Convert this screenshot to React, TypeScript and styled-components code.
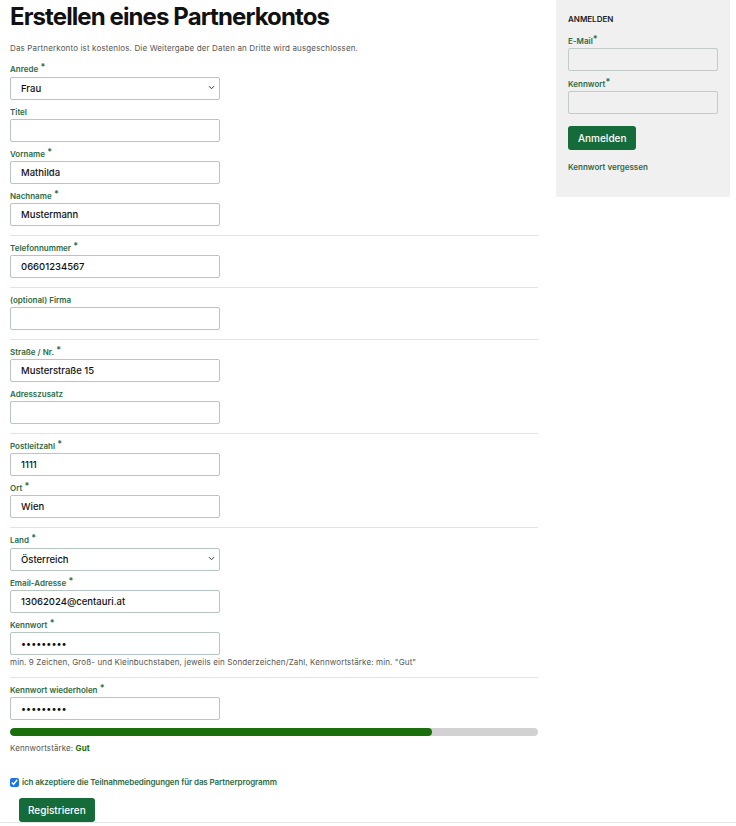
import React from "react";
import styled, { createGlobalStyle } from "styled-components";

const GlobalStyle = createGlobalStyle`
    body {
        margin: 0;
        background: #ffffff;
        font-family: Inter, "Noto Sans", sans-serif;
        color: #222;
    }
`;

type TField = {
    label: string
    required?: boolean
    value?: string
    kind?: "text" | "select" | "password"
}

const groups: TField[][] = [
    [
        { label: "Anrede", required: true, value: "Frau", kind: "select" },
        { label: "Titel" },
        { label: "Vorname", required: true, value: "Mathilda" },
        { label: "Nachname", required: true, value: "Mustermann" }
    ],
    [
        { label: "Telefonnummer", required: true, value: "06601234567" }
    ],
    [
        { label: "(optional) Firma" }
    ],
    [
        { label: "Straße / Nr.", required: true, value: "Musterstraße 15" },
        { label: "Adresszusatz" }
    ],
    [
        { label: "Postleitzahl", required: true, value: "1111" },
        { label: "Ort", required: true, value: "Wien" }
    ]
];

const FormField = ({ label, required, value = "", kind = "text" }: TField) => (
    <Field>
        <Label>
            {label}
            {required && <Star> *</Star>}
        </Label>
        {kind === "select" ? (
            <SelectWrap>
                <Select defaultValue={value}>
                    <option value={value}>{value}</option>
                </Select>
                <Chevron width="7" height="5" viewBox="0 0 7 5">
                    <path d="M1 1.2 L3.5 3.7 L6 1.2" fill="none" stroke="#333" strokeWidth="1" />
                </Chevron>
            </SelectWrap>
        ) : (
            <Input type={kind} defaultValue={value} />
        )}
    </Field>
);

const App = () => {
    return (
        <>
            <GlobalStyle />
            <Page>
                <Main>
                    <Title>Erstellen eines Partnerkontos</Title>
                    <Intro>Das Partnerkonto ist kostenlos. Die Weitergabe der Daten an Dritte wird ausgeschlossen.</Intro>
                    {
                        groups.map((group, i) => (
                            <React.Fragment key={i}>
                                {i > 0 && <Divider />}
                                <Group first={i === 0}>
                                    {group.map((f) => <FormField key={f.label} {...f} />)}
                                </Group>
                            </React.Fragment>
                        ))
                    }
                    <Divider />
                    <Group>
                        <FormField label="Land" required value="Österreich" kind="select" />
                        <FormField label="Email-Adresse" required value="13062024@centauri.at" />
                        <FormField label="Kennwort" required value="Abcdefg1!" kind="password" />
                    </Group>
                    <Hint>min. 9 Zeichen, Groß- und Kleinbuchstaben, jeweils ein Sonderzeichen/Zahl, Kennwortstärke: min. "Gut"</Hint>
                    <Divider />
                    <Group>
                        <FormField label="Kennwort wiederholen" required value="Abcdefg1!" kind="password" />
                    </Group>
                    <Meter>
                        <MeterFill style={{ width: "80%" }} />
                    </Meter>
                    <Strength>Kennwortstärke: <b>Gut</b></Strength>
                    <CheckRow>
                        <Checkbox type="checkbox" defaultChecked />
                        ich akzeptiere die Teilnahmebedingungen für das Partnerprogramm
                    </CheckRow>
                    <SubmitButton>Registrieren</SubmitButton>
                </Main>
                <Sidebar>
                    <SideTitle>ANMELDEN</SideTitle>
                    <SideField>
                        <Label>E-Mail<Star>*</Star></Label>
                        <SideInput type="text" />
                    </SideField>
                    <SideField>
                        <Label>Kennwort<Star>*</Star></Label>
                        <SideInput type="password" />
                    </SideField>
                    <LoginButton>Anmelden</LoginButton>
                    <Forgot>Kennwort vergessen</Forgot>
                </Sidebar>
            </Page>
            <Footer />
        </>
    );
}

export default App;

const green = "#2d6a45";
const font = `Inter, "Noto Sans", sans-serif`;

const Page = styled.div`
    display: flex;
    align-items: flex-start;
    padding-left: 10px;
    column-gap: 18px;
`;

const Main = styled.div`
    width: 528px;
    display: flex;
    flex-direction: column;
`;

const Title = styled.h1`
    margin: 0;
    font-size: 24px;
    line-height: 34px;
    font-weight: 700;
    letter-spacing: -0.9px;
    color: #111;
`;

const Intro = styled.p`
    margin: 8px 0 0;
    font-size: 8px;
    line-height: 12px;
    letter-spacing: 0.15px;
    color: #555;
`;

const Group = styled.div<{ first?: boolean }>`
    display: flex;
    flex-direction: column;
    row-gap: 7px;
    margin-top: ${({ first }) => (first ? "10px" : "7px")};
`;

const Field = styled.div`
    display: flex;
    flex-direction: column;
    row-gap: 2px;
    width: 210px;
`;

const Label = styled.label`
    font-size: 8px;
    line-height: 10px;
    font-weight: 600;
    color: ${green};
`;

const Star = styled.span`
    position: relative;
    top: -2px;
    font-size: 9px;
    line-height: 0;
`;

const inputBase = `
    box-sizing: border-box;
    width: 100%;
    height: 23px;
    margin: 0;
    border: 1px solid #b7c6be;
    border-radius: 2px;
    background: #fff;
    padding: 0 10px;
    font-family: ${font};
    font-size: 9.5px;
    font-weight: 500;
    color: #111;
    outline: none;
`;

const Input = styled.input`
    ${inputBase}
`;

const SelectWrap = styled.div`
    position: relative;
`;

const Select = styled.select`
    ${inputBase}
    appearance: none;
    -webkit-appearance: none;
`;

const Chevron = styled.svg`
    position: absolute;
    right: 5px;
    top: 9px;
    pointer-events: none;
`;

const Divider = styled.hr`
    margin: 9px 0 0;
    border: none;
    border-top: 1px solid #e2e2e2;
    height: 0;
`;

const Hint = styled.div`
    margin-top: 2px;
    font-size: 8px;
    line-height: 10px;
    letter-spacing: 0.12px;
    color: #555;
    padding-bottom: 1px;
`;

const Meter = styled.div`
    margin-top: 8px;
    height: 8px;
    border-radius: 4px;
    background: #d2d2d2;
    overflow: hidden;
`;

const MeterFill = styled.div`
    height: 100%;
    border-radius: 4px;
    background: #1b6e0c;
`;

const Strength = styled.div`
    margin-top: 7px;
    font-size: 8px;
    line-height: 10px;
    letter-spacing: 0.1px;
    color: #555;

    b {
        color: #1b6e0c;
        font-weight: 700;
    }
`;

const CheckRow = styled.label`
    display: flex;
    align-items: center;
    column-gap: 3px;
    margin-top: 23px;
    font-size: 8px;
    line-height: 12px;
    font-weight: 600;
    letter-spacing: -0.1px;
    color: ${green};
`;

const Checkbox = styled.input`
    margin: 0;
    width: 9px;
    height: 9px;
    accent-color: #1a73e8;
`;

const buttonBase = `
    height: 24px;
    padding: 0 10px;
    border: none;
    border-radius: 3px;
    background: #166b3b;
    color: #fff;
    font-family: ${font};
    font-size: 10px;
    font-weight: 500;
`;

const SubmitButton = styled.button`
    ${buttonBase}
    align-self: flex-start;
    margin: 10px 0 0 9px;
    padding: 0 9px;
`;

const Footer = styled.div`
    border-top: 1px solid #e6e6e6;
`;

const Sidebar = styled.aside`
    width: 174px;
    box-sizing: border-box;
    padding: 14px 12px 25px;
    background: #f0f0f0;
    display: flex;
    flex-direction: column;
    align-items: flex-start;
`;

const SideTitle = styled.div`
    font-size: 8px;
    line-height: 10px;
    font-weight: 600;
    color: #222;
`;

const SideField = styled.div`
    display: flex;
    flex-direction: column;
    row-gap: 2px;
    width: 150px;
    margin-top: 12px;
    & + & {
        margin-top: 8px;
    }
`;

const SideInput = styled.input`
    ${inputBase}
    background: #f0f0f0;
    border-color: #c2cbc6;
`;

const LoginButton = styled.button`
    ${buttonBase}
    margin-top: 12px;
`;

const Forgot = styled.a`
    margin-top: 12px;
    font-size: 8px;
    line-height: 10px;
    font-weight: 600;
    color: ${green};
`;
